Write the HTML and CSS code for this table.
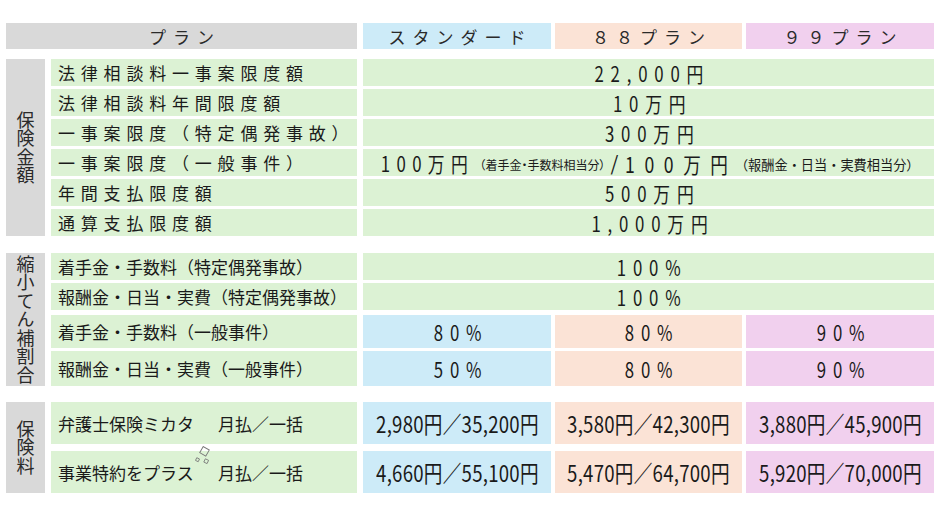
FILE: index.html
```html
<!DOCTYPE html>
<html lang="ja">
<head>
<meta charset="utf-8">
<title>プラン比較</title>
<link rel="stylesheet" href="styles.css">
</head>
<body>
<div class="sheet">
  <div class="grid head">
    <div class="cell h plan">プラン</div>
    <div class="cell h std">スタンダード</div>
    <div class="cell h p88">８８プラン</div>
    <div class="cell h p99">９９プラン</div>
  </div>

  <div class="grid sec1">
    <div class="side"><span class="vt">保険金額</span></div>
    <div class="cell label sp">法律相談料一事案限度額</div>
    <div class="cell val all"><span class="num">22,000円</span></div>
    <div class="cell label sp">法律相談料年間限度額</div>
    <div class="cell val all"><span class="num">10万円</span></div>
    <div class="cell label sp">一事案限度（特定偶発事故）</div>
    <div class="cell val all"><span class="num">300万円</span></div>
    <div class="cell label sp">一事案限度（一般事件）</div>
    <div class="cell val all mixed"><span class="num n1">100万円</span><span class="small s1">（着手金・手数料相当分）</span><span class="slash">/</span><span class="num n2">100万円</span><span class="small s2">（報酬金・日当・実費相当分）</span></div>
    <div class="cell label sp">年間支払限度額</div>
    <div class="cell val all"><span class="num">500万円</span></div>
    <div class="cell label sp">通算支払限度額</div>
    <div class="cell val all"><span class="num">1,000万円</span></div>
  </div>

  <div class="grid sec2">
    <div class="side"><span class="vt">縮小てん補割合</span></div>
    <div class="cell label">着手金・手数料（特定偶発事故）</div>
    <div class="cell val all"><span class="num">100%</span></div>
    <div class="cell label">報酬金・日当・実費（特定偶発事故）</div>
    <div class="cell val all"><span class="num">100%</span></div>
    <div class="cell label r3">着手金・手数料（一般事件）</div>
    <div class="cell val std r3"><span class="num">80%</span></div>
    <div class="cell val p88 r3"><span class="num">80%</span></div>
    <div class="cell val p99 r3"><span class="num">90%</span></div>
    <div class="cell label">報酬金・日当・実費（一般事件）</div>
    <div class="cell val std"><span class="num">50%</span></div>
    <div class="cell val p88"><span class="num">80%</span></div>
    <div class="cell val p99"><span class="num">90%</span></div>
  </div>

  <div class="grid sec3">
    <div class="side"><span class="vt">保険料</span></div>
    <div class="cell label"><span class="lname">弁護士保険ミカタ</span><span>月払／一括</span></div>
    <div class="cell val std"><span class="price">2,980円／35,200円</span></div>
    <div class="cell val p88"><span class="price">3,580円／42,300円</span></div>
    <div class="cell val p99"><span class="price">3,880円／45,900円</span></div>
    <div class="cell label sparkled"><span class="lname">事業特約をプラス</span><span>月払／一括</span>
      <svg class="sparkle" width="20" height="22" viewBox="0 0 20 22" aria-hidden="true">
        <rect x="6" y="1.8" width="7" height="7" transform="rotate(30 9.5 5.3)" fill="none" stroke="#777777" stroke-width="0.9"/>
        <rect x="1" y="12.2" width="3" height="3" transform="rotate(25 2.5 13.7)" fill="none" stroke="#777777" stroke-width="0.8"/>
        <rect x="9.4" y="13.4" width="3.6" height="3.6" transform="rotate(25 11.2 15.2)" fill="none" stroke="#777777" stroke-width="0.8"/>
      </svg>
    </div>
    <div class="cell val std"><span class="price">4,660円／55,100円</span></div>
    <div class="cell val p88"><span class="price">5,470円／64,700円</span></div>
    <div class="cell val p99"><span class="price">5,920円／70,000円</span></div>
  </div>
</div>
</body>
</html>
```

FILE: styles.css
```css
html, body {
  margin: 0;
  background: #ffffff;
}

body {
  padding: 23px 6px 0 6px;
  font-family: "Noto Sans CJK JP", sans-serif;
  color: #1a1a1a;
}

.grid {
  display: grid;
  grid-template-columns: 41px 308px 188px 187px 188px;
  column-gap: 4px;
}

.head {
  grid-template-rows: 26px;
  margin-bottom: 10px;
}

.sec1 {
  grid-template-rows: repeat(6, 27px);
  row-gap: 3px;
  margin-bottom: 17px;
}

.sec2 {
  grid-template-rows: 27px 27px 35px 35px;
  row-gap: 3px;
  margin-bottom: 16px;
}

.sec3 {
  grid-template-rows: 42px 42px;
  row-gap: 7px;
}

.cell {
  display: flex;
  align-items: center;
  white-space: nowrap;
}

/* header */
.h {
  justify-content: center;
  font-size: 17px;
  letter-spacing: 7px;
  padding-left: 7px;
  color: #2a2a2a;
}

.plan {
  grid-column: 1 / 3;
  margin-right: 2px;
  background: #d9d9d9;
}

.std { background: #cdebf8; }
.p88 { background: #fbe3d6; }
.p99 { background: #f1d0ee; }

/* left side group labels */
.side {
  grid-column: 1;
  grid-row: 1 / -1;
  margin-right: 2px;
  background: #d9d9d9;
  display: flex;
  align-items: center;
  justify-content: center;
}

.vt {
  writing-mode: vertical-rl;
  text-orientation: upright;
  font-size: 18px;
  line-height: 20px;
  letter-spacing: 0.5px;
  color: #2a2a2a;
}

/* row labels */
.label {
  grid-column: 2;
  margin-right: 2px;
  background: #dcf2d4;
  padding-left: 7px;
  font-size: 17px;
}

.label.sp {
  letter-spacing: 5.8px;
}

.lname {
  display: inline-block;
  width: 160px;
}

.sparkled {
  position: relative;
}

.sparkle {
  position: absolute;
  left: 144px;
  top: -5px;
}

/* values */
.val {
  justify-content: center;
}

.all {
  grid-column: 3 / 6;
  background: #dcf2d4;
}

.num {
  display: inline-block;
  font-size: 21px;
  letter-spacing: 8.5px;
  margin-left: 8px;
  transform: scaleX(0.8);
}

.mixed {
  padding-left: 4px;
}

.mixed .n1 {
  font-size: 21px;
  letter-spacing: 8px;
  margin: 0 -10px 0 -12px;
}

.mixed .n2 {
  font-size: 22px;
  letter-spacing: 12px;
  margin: 0 -14px 0 -14px;
}

.small {
  letter-spacing: 0;
  margin-top: 3px;
}

.s1 {
  font-size: 12px;
  font-feature-settings: "palt";
  margin-left: 3px;
  margin-right: 3px;
}

.s2 {
  font-size: 13.2px;
  margin-left: -3px;
}

.slash {
  font-size: 20px;
  margin: 0 7px 0 2px;
}

.r3 {
  margin-top: 2px;
}

.price {
  display: inline-block;
  font-size: 23px;
  letter-spacing: 0.3px;
  transform: scaleX(0.81);
}
```
